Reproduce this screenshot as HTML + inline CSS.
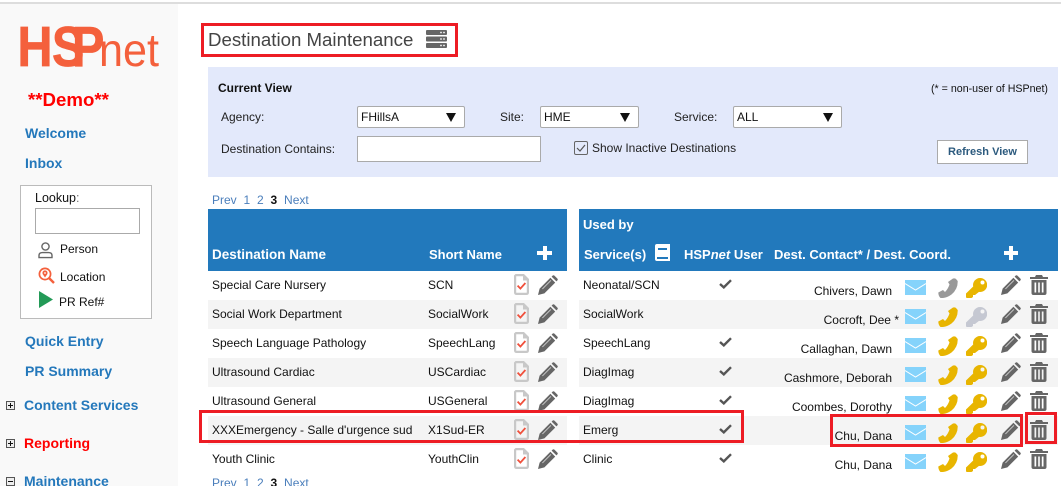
<!DOCTYPE html>
<html><head><meta charset="utf-8"><style>
html,body{margin:0;padding:0;background:#fff}
#p{position:relative;width:1061px;height:486px;overflow:hidden;background:#fff;font-family:"Liberation Sans",sans-serif;font-size:12px;color:#111}
#p div,#p svg.a{position:absolute}
.t{line-height:14px;white-space:nowrap}
.n{font-weight:bold;font-size:14px;color:#2478bb}
.h{font-weight:bold;font-size:13px;color:#fff}
.r{text-align:right;width:120px;left:772px}
.l{color:#222}
.pg{color:#4a7ebb;word-spacing:.08px}
.box{box-sizing:border-box;border:3px solid #ed1c24}
.sel{box-sizing:border-box;background:#fff;border:1px solid #aaa;border-radius:2px;height:22px;line-height:20px;padding-left:3px;color:#111}
.tri{width:0;height:0;border-left:5px solid transparent;border-right:5px solid transparent;border-top:9px solid #111;top:6px}
.pm{box-sizing:border-box;left:6px;width:9px;height:9px;border:1px solid #555;background:#eee}
.pm:before{content:"";position:absolute;left:1px;top:3px;width:5px;height:1px;background:#111}
.pm.v:after{content:"";position:absolute;left:3px;top:1px;width:1px;height:5px;background:#111}
</style></head><body><div id="p">
<svg width="0" height="0" style="position:absolute"><defs>
<symbol id="pen" viewBox="0 0 20 20"><path fill="#666" d="M0 20 L1.6 13.6 L12.4 2.8 L17.2 7.6 L6.4 18.4 Z M13.6 1.6 L14.6 .6 Q15.4 -.2 16.4 .6 L19.4 3.6 Q20.2 4.6 19.4 5.4 L18.4 6.4 Z"/><path stroke="#ddd" stroke-width=".8" d="M4.4 14 L13 5.4"/></symbol>
<symbol id="trash" viewBox="0 0 18 20"><path fill="#666" fill-rule="evenodd" d="M6 0 H12 L13 2 H18 V4 H0 V2 H5 Z M1.5 5 H16.5 V18 Q16.5 20 14.5 20 H3.5 Q1.5 20 1.5 18 Z M4.5 7.5 V17.5 H6.2 V7.5 Z M8.2 7.5 V17.5 H9.8 V7.5 Z M11.8 7.5 V17.5 H13.5 V7.5 Z"/></symbol>
<symbol id="mail" viewBox="0 0 21 15"><rect width="21" height="15" fill="#85d3fb"/><path d="M0 3.5 L10.5 10 L21 3.5" fill="none" stroke="#fff" stroke-width="1"/></symbol>
<symbol id="ph" viewBox="0 0 20 20"><path d="M.3 14.5 L5 12 L7 14 Q10 11 11.5 6.5 L10 4 L15 .5 Q17 0 18 1 L19.7 3 Q20 11 13.5 16.5 Q8 20.5 2.5 20 Q.3 18 .3 14.5 Z"/></symbol>
<symbol id="key" viewBox="0 0 21 20"><path fill-rule="evenodd" d="M14 0 A7 7 0 1 1 13 13.9 L9 17 H7 V19 L5.5 20 H1 Q0 20 0 19 V15.5 L7.2 8.5 A7 7 0 0 1 14 0 Z M16.5 2.5 A2 2 0 1 0 16.5 6.5 A2 2 0 1 0 16.5 2.5 Z"/></symbol>
<symbol id="doc" viewBox="0 0 15 21"><path fill="none" stroke="#c8c8c8" stroke-width="2.2" d="M2 1.1 H9.5 L13.9 5.5 V18.4 Q13.9 19.9 12.4 19.9 H2.6 Q1.1 19.9 1.1 18.4 V2 Z"/><path fill="#c8c8c8" d="M9 1 V6.5 H14 Z"/><path fill="none" stroke="#f0503c" stroke-width="1.8" d="M3.6 11.6 L6.4 14.6 L11.4 9"/></symbol>
<symbol id="chk" viewBox="0 0 13 10"><path fill="none" stroke="#555" stroke-width="2.4" d="M1 5 L4.8 8.4 L12 1.2"/></symbol>
</defs></svg>

<div style="left:0;top:2px;width:1061px;height:2px;background:#ddd"></div>
<div style="left:0;top:4px;width:178px;height:482px;background:#f9f9f9"></div>

<svg class="a" style="left:0;top:0" width="178" height="80"><text transform="scale(.85,1)" x="20.6 61.2 84.7" y="66" font-family="Liberation Sans" font-weight="bold" font-size="57" fill="#f4603c" stroke="#f4603c" stroke-width=".8">HSP</text><text x="99" y="66" font-family="Liberation Sans" font-size="46" fill="#f4603c" textLength="60" lengthAdjust="spacingAndGlyphs">net</text></svg>

<div class="t" style="left:28px;top:91px;font-size:18.67px;line-height:18px;font-weight:bold;color:#f00">**Demo**</div>
<div class="t n" style="left:25px;top:126px">Welcome</div>
<div class="t n" style="left:25px;top:156px">Inbox</div>

<div style="box-sizing:border-box;left:20px;top:185px;width:132px;height:134px;border:1px solid #bbb;background:#fff"></div>
<div class="t" style="left:35px;top:191px;font-size:12.5px">Lookup<span style="color:#777">:</span></div>
<div style="box-sizing:border-box;left:35px;top:208px;width:105px;height:26px;border:1px solid #aaa;background:#fff"></div>
<svg class="a" style="left:38px;top:242px" width="15" height="17" viewBox="0 0 15 17"><circle cx="7.5" cy="4.5" r="3.6" fill="none" stroke="#666" stroke-width="1.4"/><path d="M1 15.6 V13.5 Q1 10.6 4.5 10.6 H10.5 Q14 10.6 14 13.5 V15.6 Z" fill="none" stroke="#666" stroke-width="1.4"/></svg>
<div class="t" style="left:60px;top:242px">Person</div>
<svg class="a" style="left:38px;top:267px" width="17" height="17" viewBox="0 0 17 17"><circle cx="7" cy="7" r="5.6" fill="none" stroke="#f4603c" stroke-width="1.7"/><path d="M11 11 L16 16" stroke="#f4603c" stroke-width="2.4"/><path d="M7 10.5 L4.6 7 A2.6 2.6 0 1 1 9.4 7 Z" fill="#f4603c"/><circle cx="7" cy="6" r=".9" fill="#fff"/></svg>
<div class="t" style="left:60px;top:270px">Location</div>
<svg class="a" style="left:39px;top:291px" width="14" height="17"><path d="M0 0 L14 8.5 L0 17 Z" fill="#239a57"/></svg>
<div class="t" style="left:59px;top:295px">PR Ref#</div>

<div class="t n" style="left:25px;top:334px">Quick Entry</div>
<div class="t n" style="left:25px;top:364px">PR Summary</div>
<div class="pm v" style="top:401px"></div>
<div class="t n" style="left:24px;top:398px">Content Services</div>
<div class="pm v" style="top:439px"></div>
<div class="t n" style="left:24px;top:436px;color:#f00">Reporting</div>
<div class="pm" style="top:477px"></div>
<div class="t n" style="left:24px;top:474px">Maintenance</div>

<!-- title -->
<div class="t" style="left:208px;top:29px;font-size:18.67px;line-height:22px;color:#444">Destination Maintenance</div>
<svg class="a" style="left:426px;top:30px" width="21" height="18" viewBox="0 0 21 18"><g fill="#666"><rect width="21" height="5" rx="1"/><rect y="6.5" width="21" height="5" rx="1"/><rect y="13" width="21" height="5" rx="1"/></g><g fill="#ddd"><rect x="14" y="1.8" width="2" height="1.4"/><rect x="17" y="1.8" width="2" height="1.4"/><rect x="14" y="8.3" width="2" height="1.4"/><rect x="17" y="8.3" width="2" height="1.4"/><rect x="14" y="14.8" width="2" height="1.4"/><rect x="17" y="14.8" width="2" height="1.4"/></g></svg>

<!-- filter panel -->
<div style="left:208px;top:67px;width:850px;height:110px;background:#e3e9fb"></div>
<div class="t" style="left:218px;top:81px;font-weight:bold;color:#111">Current View</div>
<div class="t" style="left:931px;top:82px;font-size:10.67px;color:#111">(* = non-user of HSPnet)</div>
<div class="t l" style="left:221px;top:110px">Agency:</div>
<div class="sel" style="left:357px;top:106px;width:108px">FHillsA<div class="tri" style="left:88px"></div></div>
<div class="t l" style="left:500px;top:110px">Site:</div>
<div class="sel" style="left:540px;top:106px;width:99px">HME<div class="tri" style="left:79px"></div></div>
<div class="t l" style="left:674px;top:110px">Service:</div>
<div class="sel" style="left:733px;top:106px;width:109px">ALL<div class="tri" style="left:89px"></div></div>
<div class="t l" style="left:221px;top:142px">Destination Contains:</div>
<div style="box-sizing:border-box;left:357px;top:136px;width:184px;height:26px;background:#fff;border:1px solid #aaa"></div>
<svg class="a" style="left:574px;top:141px" width="14" height="14"><rect x=".5" y=".5" width="13" height="13" rx="1.5" fill="#e3e9fb" stroke="#666"/><path d="M3 7 L6 10 L11 4" fill="none" stroke="#555" stroke-width="1.2"/></svg>
<div class="t l" style="left:592px;top:141px">Show Inactive Destinations</div>
<div class="t" style="box-sizing:border-box;left:937px;top:140px;width:91px;height:24px;background:#fff;border:1px solid #aaa;text-align:center;line-height:23px;font-size:11px;font-weight:bold;color:#2c5a7e">Refresh View</div>

<div class="t pg" style="left:212px;top:193px">Prev&nbsp; 1&nbsp; 2&nbsp; <b style="color:#111;font-weight:bold">3</b>&nbsp; Next</div>

<!-- headers -->
<div style="left:208px;top:209px;width:359px;height:62px;background:#2279bc"></div>
<div style="left:579px;top:209px;width:479px;height:62px;background:#2279bc"></div>
<div class="t h" style="left:212px;top:248px;font-size:13.5px">Destination Name</div>
<div class="t h" style="left:429px;top:248px">Short Name</div>
<div style="left:537px;top:251px;width:15px;height:4px;background:#fff"></div>
<div style="left:543px;top:246px;width:4px;height:14px;background:#fff"></div>
<div class="t h" style="left:583px;top:218px">Used by</div>
<div class="t h" style="left:584px;top:248px">Service(s)</div>
<svg class="a" style="left:655px;top:244px" width="15" height="17"><path fill="#fff" fill-rule="evenodd" d="M2 0 H15 V17 H2 Q0 17 0 15 V2 Q0 0 2 0 Z M3 4 V6 H12 V4 Z M2 13 V15 H13 V13 Z"/></svg>
<div class="t h" style="left:684px;top:248px">HSP<i>net</i> User</div>
<div class="t h" style="left:774px;top:248px">Dest. Contact* / Dest. Coord.</div>
<div style="left:1004px;top:251px;width:14px;height:4px;background:#fff"></div>
<div style="left:1009px;top:246px;width:4px;height:14px;background:#fff"></div>

<!-- grey row stripes -->
<div style="left:208px;top:300px;width:359px;height:29px;background:#f4f4f4"></div>
<div style="left:579px;top:300px;width:479px;height:29px;background:#f4f4f4"></div>
<div style="left:208px;top:358px;width:359px;height:29px;background:#f4f4f4"></div>
<div style="left:579px;top:358px;width:479px;height:29px;background:#f4f4f4"></div>
<div style="left:208px;top:416px;width:359px;height:29px;background:#f4f4f4"></div>
<div style="left:579px;top:416px;width:479px;height:29px;background:#f4f4f4"></div>

<!-- row 1 -->
<div class="t" style="left:212px;top:278px">Special Care Nursery</div><div class="t" style="left:428px;top:278px">SCN</div><div class="t" style="left:583px;top:278px">Neonatal/SCN</div><div class="t r" style="top:284px">Chivers, Dawn</div>
<!-- row 2 -->
<div class="t" style="left:212px;top:307px">Social Work Department</div><div class="t" style="left:428px;top:307px">SocialWork</div><div class="t" style="left:583px;top:307px">SocialWork</div><div class="t r" style="top:313px;left:779px">Cocroft, Dee *</div>
<!-- row 3 -->
<div class="t" style="left:212px;top:336px">Speech Language Pathology</div><div class="t" style="left:428px;top:336px">SpeechLang</div><div class="t" style="left:583px;top:336px">SpeechLang</div><div class="t r" style="top:342px">Callaghan, Dawn</div>
<!-- row 4 -->
<div class="t" style="left:212px;top:365px">Ultrasound Cardiac</div><div class="t" style="left:428px;top:365px">USCardiac</div><div class="t" style="left:583px;top:365px">DiagImag</div><div class="t r" style="top:371px">Cashmore, Deborah</div>
<!-- row 5 -->
<div class="t" style="left:212px;top:394px">Ultrasound General</div><div class="t" style="left:428px;top:394px">USGeneral</div><div class="t" style="left:583px;top:394px">DiagImag</div><div class="t r" style="top:400px">Coombes, Dorothy</div>
<!-- row 6 -->
<div class="t" style="left:212px;top:423px">XXXEmergency - Salle d'urgence sud</div><div class="t" style="left:428px;top:423px">X1Sud-ER</div><div class="t" style="left:583px;top:423px">Emerg</div><div class="t r" style="top:429px">Chu, Dana</div>
<!-- row 7 -->
<div class="t" style="left:212px;top:452px">Youth Clinic</div><div class="t" style="left:428px;top:452px">YouthClin</div><div class="t" style="left:583px;top:452px">Clinic</div><div class="t r" style="top:458px">Chu, Dana</div>

<div class="t pg" style="left:212px;top:476px">Prev&nbsp; 1&nbsp; 2&nbsp; <b style="color:#111">3</b>&nbsp; Next</div>

<!-- doc icons -->
<svg class="a" style="left:514px;top:274px" width="15" height="21"><use href="#doc"/></svg>
<svg class="a" style="left:514px;top:303px" width="15" height="21"><use href="#doc"/></svg>
<svg class="a" style="left:514px;top:332px" width="15" height="21"><use href="#doc"/></svg>
<svg class="a" style="left:514px;top:361px" width="15" height="21"><use href="#doc"/></svg>
<svg class="a" style="left:514px;top:390px" width="15" height="21"><use href="#doc"/></svg>
<svg class="a" style="left:514px;top:419px" width="15" height="21"><use href="#doc"/></svg>
<svg class="a" style="left:514px;top:448px" width="15" height="21"><use href="#doc"/></svg>
<!-- left pencils -->
<svg class="a" style="left:538px;top:275px" width="20" height="20"><use href="#pen"/></svg>
<svg class="a" style="left:538px;top:304px" width="20" height="20"><use href="#pen"/></svg>
<svg class="a" style="left:538px;top:333px" width="20" height="20"><use href="#pen"/></svg>
<svg class="a" style="left:538px;top:362px" width="20" height="20"><use href="#pen"/></svg>
<svg class="a" style="left:538px;top:391px" width="20" height="20"><use href="#pen"/></svg>
<svg class="a" style="left:538px;top:420px" width="20" height="20"><use href="#pen"/></svg>
<svg class="a" style="left:538px;top:449px" width="20" height="20"><use href="#pen"/></svg>
<!-- checks -->
<svg class="a" style="left:719px;top:279px" width="13" height="10"><use href="#chk"/></svg>
<svg class="a" style="left:719px;top:337px" width="13" height="10"><use href="#chk"/></svg>
<svg class="a" style="left:719px;top:366px" width="13" height="10"><use href="#chk"/></svg>
<svg class="a" style="left:719px;top:395px" width="13" height="10"><use href="#chk"/></svg>
<svg class="a" style="left:719px;top:424px" width="13" height="10"><use href="#chk"/></svg>
<svg class="a" style="left:719px;top:453px" width="13" height="10"><use href="#chk"/></svg>
<!-- mail -->
<svg class="a" style="left:905px;top:280px" width="21" height="15"><use href="#mail"/></svg>
<svg class="a" style="left:905px;top:309px" width="21" height="15"><use href="#mail"/></svg>
<svg class="a" style="left:905px;top:338px" width="21" height="15"><use href="#mail"/></svg>
<svg class="a" style="left:905px;top:367px" width="21" height="15"><use href="#mail"/></svg>
<svg class="a" style="left:905px;top:396px" width="21" height="15"><use href="#mail"/></svg>
<svg class="a" style="left:905px;top:425px" width="21" height="15"><use href="#mail"/></svg>
<svg class="a" style="left:905px;top:454px" width="21" height="15"><use href="#mail"/></svg>
<!-- phones -->
<svg class="a" style="left:938px;top:278px" width="20" height="20" fill="#999"><use href="#ph"/></svg>
<svg class="a" style="left:938px;top:307px" width="20" height="20" fill="#e8b500"><use href="#ph"/></svg>
<svg class="a" style="left:938px;top:336px" width="20" height="20" fill="#e8b500"><use href="#ph"/></svg>
<svg class="a" style="left:938px;top:365px" width="20" height="20" fill="#e8b500"><use href="#ph"/></svg>
<svg class="a" style="left:938px;top:394px" width="20" height="20" fill="#e8b500"><use href="#ph"/></svg>
<svg class="a" style="left:938px;top:423px" width="20" height="20" fill="#e8b500"><use href="#ph"/></svg>
<svg class="a" style="left:938px;top:452px" width="20" height="20" fill="#e8b500"><use href="#ph"/></svg>
<!-- keys -->
<svg class="a" style="left:966px;top:278px" width="21" height="20" fill="#e8b500"><use href="#key"/></svg>
<svg class="a" style="left:966px;top:307px" width="21" height="20" fill="#c5c8d2"><use href="#key"/></svg>
<svg class="a" style="left:966px;top:336px" width="21" height="20" fill="#e8b500"><use href="#key"/></svg>
<svg class="a" style="left:966px;top:365px" width="21" height="20" fill="#e8b500"><use href="#key"/></svg>
<svg class="a" style="left:966px;top:394px" width="21" height="20" fill="#e8b500"><use href="#key"/></svg>
<svg class="a" style="left:966px;top:423px" width="21" height="20" fill="#e8b500"><use href="#key"/></svg>
<svg class="a" style="left:966px;top:452px" width="21" height="20" fill="#e8b500"><use href="#key"/></svg>
<!-- right pencils -->
<svg class="a" style="left:1001px;top:275px" width="20" height="20"><use href="#pen"/></svg>
<svg class="a" style="left:1001px;top:304px" width="20" height="20"><use href="#pen"/></svg>
<svg class="a" style="left:1001px;top:333px" width="20" height="20"><use href="#pen"/></svg>
<svg class="a" style="left:1001px;top:362px" width="20" height="20"><use href="#pen"/></svg>
<svg class="a" style="left:1001px;top:391px" width="20" height="20"><use href="#pen"/></svg>
<svg class="a" style="left:1001px;top:420px" width="20" height="20"><use href="#pen"/></svg>
<svg class="a" style="left:1001px;top:449px" width="20" height="20"><use href="#pen"/></svg>
<!-- trash -->
<svg class="a" style="left:1030px;top:275px" width="18" height="20"><use href="#trash"/></svg>
<svg class="a" style="left:1030px;top:304px" width="18" height="20"><use href="#trash"/></svg>
<svg class="a" style="left:1030px;top:333px" width="18" height="20"><use href="#trash"/></svg>
<svg class="a" style="left:1030px;top:362px" width="18" height="20"><use href="#trash"/></svg>
<svg class="a" style="left:1030px;top:391px" width="18" height="20"><use href="#trash"/></svg>
<svg class="a" style="left:1030px;top:420px" width="18" height="20"><use href="#trash"/></svg>
<svg class="a" style="left:1030px;top:449px" width="18" height="20"><use href="#trash"/></svg>

<!-- red annotation boxes -->
<div class="box" style="left:201px;top:23px;width:257px;height:34px"></div>
<div class="box" style="left:199px;top:410px;width:545px;height:33px"></div>
<div class="box" style="left:830px;top:414px;width:193px;height:33px"></div>
<div class="box" style="left:1025px;top:412px;width:32px;height:32px"></div>
</div></body></html>
